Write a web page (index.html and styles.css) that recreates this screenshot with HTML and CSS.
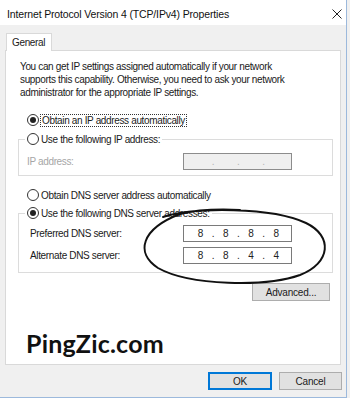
FILE: index.html
```html
<!DOCTYPE html>
<html>
<head>
<meta charset="utf-8">
<link rel="stylesheet" href="styles.css">
</head>
<body>
<div class="window">
  <div class="titlebar">
    <span class="title">Internet Protocol Version 4 (TCP/IPv4) Properties</span>
    <svg class="close" width="10" height="10" viewBox="0 0 10 10"><path d="M0.5 0.5 L9.5 9.5 M9.5 0.5 L0.5 9.5" stroke="#222" stroke-width="1"/></svg>
  </div>
  <div class="tabs"><div class="tab">General</div></div>
  <div class="panel">
    <p class="intro">You can get IP settings assigned automatically if your network<br>supports this capability. Otherwise, you need to ask your network<br>administrator for the appropriate IP settings.</p>
    <div class="radio-row first"><span class="radio checked"></span><span class="focus">Obtain an IP address automatically</span></div>
    <fieldset class="group">
      <legend><span class="radio"></span><span>Use the following IP address:</span></legend>
      <div class="field disabled"><span class="label">IP address:</span>
        <div class="ipbox off"><span></span><i>.</i><span></span><i>.</i><span></span><i>.</i><span></span></div>
      </div>
    </fieldset>
    <div class="radio-row dnsauto"><span class="radio"></span><span>Obtain DNS server address automatically</span></div>
    <fieldset class="group dns">
      <legend><span class="radio checked"></span><span>Use the following DNS server addresses:</span></legend>
      <div class="field"><span class="label">Preferred DNS server:</span>
        <div class="ipbox"><span>8</span><i>.</i><span>8</span><i>.</i><span>8</span><i>.</i><span>8</span></div>
      </div>
      <div class="field"><span class="label">Alternate DNS server:</span>
        <div class="ipbox"><span>8</span><i>.</i><span>8</span><i>.</i><span>4</span><i>.</i><span>4</span></div>
      </div>
    </fieldset>
    <div class="adv-row"><button class="btn adv">Advanced...</button></div>
    <div class="brand">PingZic.com</div>
  </div>
  <div class="footer">
    <button class="btn ok">OK</button>
    <button class="btn cancel">Cancel</button>
  </div>
  <svg class="ellipse" width="350" height="398" viewBox="0 0 350 398">
    <path d="M163 217 C 195 207, 272 207, 306 223 C 333 236, 331 263, 300 275 C 266 287, 190 286, 158 268 C 135 253, 141 229, 180 214 C 200 209, 220 209, 240 210" fill="none" stroke="#111" stroke-width="2" stroke-linecap="round"/>
  </svg>
</div>
</body>
</html>
```
FILE: styles.css
```css
* { box-sizing: border-box; }
html, body { margin: 0; padding: 0; }
body {
  width: 350px;
  height: 398px;
  background: #f0f0f0;
  font-family: "Liberation Sans", Arial, sans-serif;
  font-size: 10px;
  letter-spacing: -0.35px;
  color: #1a1a1a;
  overflow: hidden;
}
.window {
  position: relative;
  width: 347px;
  height: 398px;
  background: #f0f0f0;
  border-right: 1px solid #9cb9dc;
  border-bottom: 1px solid #9cb9dc;
}
.titlebar {
  height: 25px;
  background: #ffffff;
  display: flex;
  align-items: center;
  justify-content: space-between;
  padding: 3px 4px 0 7px;
}
.title { font-size: 10.5px; letter-spacing: -0.15px; color: #111; }
.tabs {
  padding: 8px 0 0 6px;
  display: flex;
}
.tab {
  height: 18px;
  margin-bottom: -1px;
  padding: 3px 6px 0 5px;
  background: #ffffff;
  border: 1px solid #d9d9d9;
  border-bottom: none;
  position: relative;
  z-index: 1;
}
.panel {
  margin: 0 5px 0 5px;
  height: 315px;
  background: #ffffff;
  border: 1px solid #d9d9d9;
  padding: 0;
}
.intro {
  margin: 9px 0 0 0;
  padding: 0 0 0 14px;
  line-height: 13px;
  white-space: nowrap;
}
.radio-row {
  display: flex;
  align-items: center;
  height: 14px;
  margin-left: 21px;
}
.radio-row.first { margin-top: 14px; }
.radio-row.dnsauto { margin-top: 12px; }
.radio {
  width: 12px;
  height: 12px;
  border: 1px solid #333;
  border-radius: 50%;
  margin-right: 2px;
  display: inline-flex;
  align-items: center;
  justify-content: center;
  flex: none;
}
.radio.checked::after {
  content: "";
  width: 6px;
  height: 6px;
  border-radius: 50%;
  background: #222;
}
.focus {
  outline: 1px dotted #333;
  outline-offset: 0;
  padding: 0 1px;
}
.group {
  margin: 5px 0 0 12px;
  width: 315px;
  border: 1px solid #dcdcdc;
  padding: 7px 0 5px 0;
}
.group legend {
  margin-left: 6px;
  padding: 0 2px 0 2px;
  display: flex;
  align-items: center;
  height: 14px;
}
.field {
  display: flex;
  align-items: center;
  height: 17px;
  padding-left: 11px;
}
.field.disabled { padding-left: 8px; color: #a6a6a6; }
.field + .field { margin-top: 5px; }
.label { width: 153px; }
.field.disabled .label { width: 156px; }
.ipbox {
  width: 109px;
  height: 17px;
  border: 1px solid #7a7a7a;
  background: #fff;
  display: flex;
  align-items: center;
  justify-content: space-around;
  padding: 0 6px 0 8px;
  color: #222;
  letter-spacing: 0;
}
.ipbox span { width: 12px; text-align: center; }
.ipbox i { font-style: normal; }
.ipbox.off {
  background: #efefef;
  border-color: #8c8c8c;
  color: #b5b5b5;
}
.dns { margin-top: 4px; padding-top: 5px; padding-bottom: 8px; }
.adv-row {
  display: flex;
  justify-content: flex-end;
  margin: 10px 10px 0 0;
}
.btn {
  font-family: "Liberation Sans", Arial, sans-serif;
  font-size: 10px;
  letter-spacing: -0.2px;
  color: #1a1a1a;
  background: #e1e1e1;
  border: 1px solid #adadad;
  padding: 0;
  height: 18px;
}
.adv { width: 78px; }
.brand {
  margin: 27px 0 0 20px;
  font-family: Lato, "Open Sans", sans-serif;
  font-weight: 700;
  font-size: 25px;
  letter-spacing: 0.2px;
  color: #111;
  line-height: 30px;
}
.footer {
  display: flex;
  justify-content: flex-end;
  gap: 7px;
  padding: 7px 4px 0 0;
}
.ok { width: 64px; border: 2px solid #0078d7; }
.cancel { width: 63px; }
.ellipse {
  position: absolute;
  left: 0;
  top: 0;
  pointer-events: none;
}
```
